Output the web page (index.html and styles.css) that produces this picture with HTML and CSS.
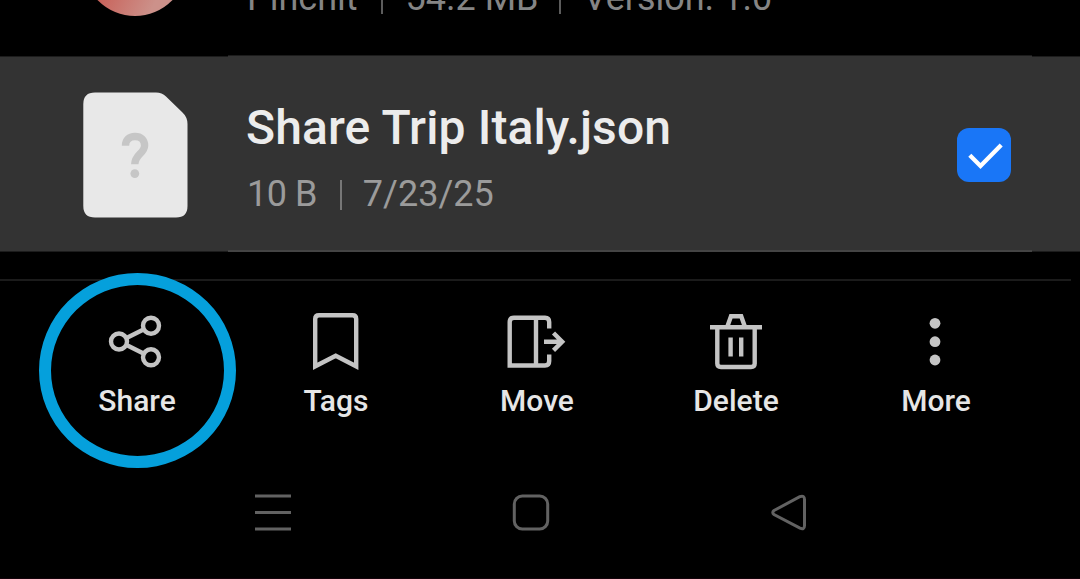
FILE: index.html
```html
<!DOCTYPE html>
<html lang="en">
<head>
<meta charset="utf-8">
<title>Files</title>
<link rel="stylesheet" href="styles.css">
</head>
<body>
<main class="screen">
  <section class="file previous">
    <div class="app-icon"></div>
    <div class="meta"><span>Pinchit</span><i class="bar"></i><span class="size">54.2 MB</span><i class="bar"></i><span class="version">Version: 1.0</span></div>
  </section>
  <section class="file selected">
    <svg class="doc" width="106" height="126" viewBox="82 92 106 126">
      <path fill="#e8e8e8" d="M95 92.5H156Q162 92.5 166 96.500L182 112Q187.500 117 187.500 124V206Q187.500 217.500 176 217.500H95Q83.300 217.500 83.300 206V104Q83.300 92.500 95 92.500Z"/>
      <path fill="none" stroke="#c6c6c6" stroke-width="7.400" d="M125.500 145.700C125.500 140 129 136.500 135 136.500C141 136.500 144.600 140 144.600 145.500C144.600 153.500 134.800 154 134.800 164.300"/>
      <circle cx="134.800" cy="173.600" r="4.400" fill="#c6c6c6"/>
    </svg>
    <div class="info">
      <div class="name">Share Trip Italy.json</div>
      <div class="meta"><span class="bytes">10 B</span><i class="bar"></i><span class="date">7/23/25</span></div>
    </div>
    <div class="check">
      <svg width="54" height="54" viewBox="957 127.500 54 54"><path d="M969.800 154.700L980.500 165.500L1001.200 144.500" fill="none" stroke="#fff" stroke-width="4.300"/></svg>
    </div>
  </section>
  <div class="divider"></div>
  <nav class="actions">
    <div class="action">
      <svg width="80" height="64" viewBox="96 310 80 64"><g class="icon"><circle cx="119" cy="341.500" r="8"/><circle cx="151" cy="325.700" r="8"/><circle cx="151" cy="357.300" r="8"/><path d="M126.500 338L143.500 329.500M126.500 345L143.500 353.500"/></g></svg>
      <span class="nudge">Share</span>
      <b class="ring"></b>
    </div>
    <div class="action">
      <svg width="80" height="64" viewBox="296 310 80 64"><path class="icon" d="M315.200 366.300V319Q315.200 315.300 319 315.300H352.500Q356.200 315.300 356.200 319V366.300L335.700 355.800Z"/></svg>
      <span>Tags</span>
    </div>
    <div class="action">
      <svg width="80" height="64" viewBox="496 310 80 64"><path class="icon" d="M549.200 328.500V322Q549.200 317.700 545 317.700H514Q509.700 317.700 509.700 322V365.500H545Q549.200 365.500 549.200 361V354.500M536 317.700V365.500M544 341.700H562M553.500 333L562.200 341.700L553.500 350.400"/></svg>
      <span class="nudge">Move</span>
    </div>
    <div class="action">
      <svg width="80" height="64" viewBox="696 310 80 64"><path class="icon" d="M710 327.300H762M717.300 328V363.500Q717.300 367 721 367H751Q754.700 367 754.700 363.500V328M727.200 327L731 316.300H741.200L745 327M730.600 337.500V356.500M741.200 337.500V356.500"/></svg>
      <span>Delete</span>
    </div>
    <div class="action">
      <svg width="80" height="64" viewBox="896 310 80 64"><g fill="#c4c4c4"><circle cx="935" cy="323.300" r="5.400"/><circle cx="935" cy="341.700" r="5.400"/><circle cx="935" cy="360" r="5.400"/></g></svg>
      <span>More</span>
    </div>
  </nav>
  <nav class="system">
    <svg width="40" height="40" viewBox="253 492 40 40"><path d="M255 496H291M255 512.600H291M255 529H291"/></svg>
    <svg width="40" height="40" viewBox="511 492 40 40"><rect x="514.300" y="496" width="33.400" height="33" rx="8"/></svg>
    <svg width="40" height="40" viewBox="769 492 40 40"><path d="M774 510.500L799.800 496.700Q804.500 495 804.500 499.500V525.500Q804.500 530 800 528.200L774 514.500Q771.500 512.500 774 510.500Z"/></svg>
  </nav>
</main>
</body>
</html>
```

FILE: styles.css
```css
* { box-sizing: border-box; }
body { margin: 0; background: #000; font-family: Roboto, sans-serif; }
.screen { width: 1080px; height: 579px; overflow: hidden; display: flex; flex-direction: column; border-bottom: 1px solid #12020a; }
.file { display: flex; flex: none; }
.previous { height: 55px; padding-left: 83px; align-items: flex-start; }
.app-icon { width: 104px; height: 104px; margin-top: -88px; margin-right: 60px; border-radius: 50%; background: linear-gradient(115deg, #c85a52 30%, #cc918a 75%); }
.meta { display: flex; font-size: 36px; line-height: 44px; color: #9b9b9b; white-space: pre; }
.previous .meta { margin-top: -24px; color: #858585; }
.bar { width: 2px; height: 30px; margin: 8px 23px 0; background: #777; flex: none; }
.previous .bar { background: #5c5c5c; }
.size { margin-right: -3px; }
.selected {
  height: 197px;
  padding: 37px 69px 0 82px;
  background:
    linear-gradient(#1c1c1c, #1c1c1c) 228px 0 / 804px 1px no-repeat,
    linear-gradient(#444, #444) 228px 195px / 804px 2px no-repeat,
    linear-gradient(#333, #333) 228px 1px / 804px 194px no-repeat,
    linear-gradient(#1c1c1c, #1c1c1c) 0 1px / 100% 1px no-repeat,
    linear-gradient(#1c1c1c, #1c1c1c) 0 196px / 100% 1px no-repeat,
    linear-gradient(#333, #333) 0 2px / 100% 194px no-repeat;
}
.doc { flex: none; margin-right: 59px; }
.info { flex: 1; padding-top: 8px; }
.name { margin-left: -1px; font-size: 48px; line-height: 56px; font-weight: 500; letter-spacing: 0.12px; color: #ececec; white-space: nowrap; }
.info .meta { margin-top: 16px; }
.bytes { letter-spacing: -0.5px; }
.date { margin-left: -2px; }
.check { width: 54px; height: 54px; margin-top: 35.5px; border-radius: 12px; background: #1976f7; }
.check svg, .action svg { display: block; }
.divider { width: 1071px; height: 2px; margin-top: 27px; background: #1b1b1b; flex: none; }
.actions { display: grid; grid-template-columns: repeat(5, 200px); padding: 29px 0 0 36px; height: 199px; flex: none; }
.action { position: relative; display: flex; flex-direction: column; align-items: center; gap: 9px; font-size: 30px; line-height: 36px; font-weight: 500; color: #e6e6e6; }
.nudge { padding-left: 2px; }
.icon { fill: none; stroke: #c4c4c4; stroke-width: 4.4; }
.ring { position: absolute; left: 3px; top: -37px; width: 197px; height: 195px; border: 12.5px solid #05a0dc; border-radius: 50%; }
.system { display: flex; gap: 218px; padding: 12px 0 0 253px; }
.system svg { fill: none; stroke: #626262; stroke-width: 3; flex: none; }
```
